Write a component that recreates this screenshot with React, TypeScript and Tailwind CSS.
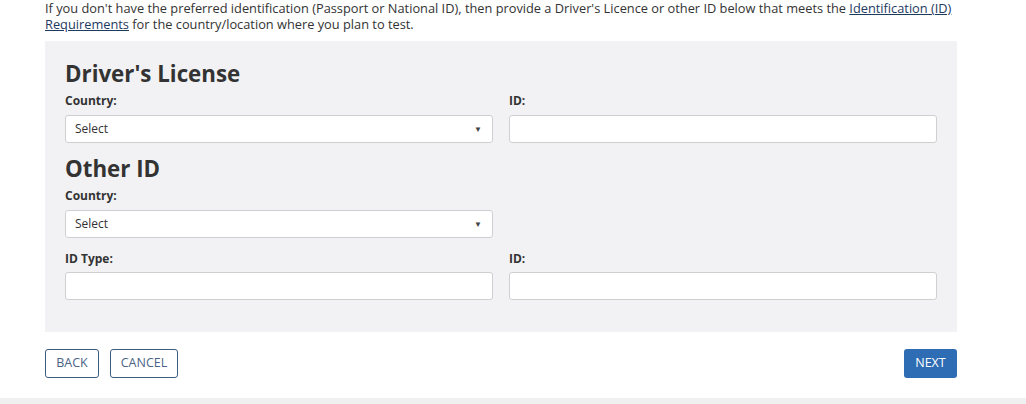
import { ReactNode } from 'react'

interface FieldProps {
  label: string
  gap?: string
  children: ReactNode
}

function Field({ label, gap = 'mt-[6px]', children }: Readonly<FieldProps>) {
  return (
    <div className="flex flex-col">
      <label className="text-[12px] leading-[16px] font-bold text-[#333]">{label}</label>
      <div className={gap}>{children}</div>
    </div>
  )
}

function SelectBox() {
  return (
    <div className="h-[28px] w-full bg-white border border-[#cfcfd2] rounded-[3px] flex items-center justify-between pl-[9px] pr-[9px]">
      <span className="text-[12px] text-[#333]">Select</span>
      <span className="text-[8px] text-[#444] leading-none mr-[1px]">▼</span>
    </div>
  )
}

function TextBox() {
  return <input type="text" className="h-[28px] w-full bg-white border border-[#cfcfd2] rounded-[3px] outline-none px-[9px] text-[12px]" />
}

export default function App() {
  return (
    <div className="w-[1026px] h-[404px] bg-white overflow-hidden flex flex-col text-[#333]" style={{ fontFamily: '"Open Sans", "Liberation Sans", sans-serif' }}>
      <div className="ml-[45px] w-[912px]">
        <p className="text-[12.8px] leading-[16px] text-[#333]">
          If you don't have the preferred identification (Passport or National ID), then provide a Driver's Licence or other ID below that meets the{' '}
          <a href="#" className="underline text-[#1d3a5f]">Identification (ID) Requirements</a> for the country/location where you plan to test.
        </p>

        <div className="mt-[9px] bg-[#f2f2f4] px-[20px] pt-[20px] pb-[32px]">
          <h2 className="text-[22.3px] leading-[26px] font-bold text-[#333]">Driver's License</h2>
          <div className="mt-[6px] grid grid-cols-2 gap-x-[16px]">
            <Field label="Country:"><SelectBox /></Field>
            <Field label="ID:"><TextBox /></Field>
          </div>

          <h2 className="mt-[13px] text-[22.3px] leading-[26px] font-bold text-[#333]">Other ID</h2>
          <div className="mt-[6px] grid grid-cols-2 gap-x-[16px]">
            <Field label="Country:"><SelectBox /></Field>
          </div>
          <div className="mt-[13px] grid grid-cols-2 gap-x-[16px]">
            <Field label="ID Type:" gap="mt-[5px]"><TextBox /></Field>
            <Field label="ID:" gap="mt-[5px]"><TextBox /></Field>
          </div>
        </div>

        <div className="mt-[17px] flex items-center justify-between">
          <div className="flex gap-[11px]">
            <button className="h-[29px] w-[54px] border border-[#3e5c7e] rounded-[3px] text-[12.5px] text-[#4b6485] bg-white">BACK</button>
            <button className="h-[29px] w-[68px] border border-[#3e5c7e] rounded-[3px] text-[12.5px] text-[#4b6485] bg-white">CANCEL</button>
          </div>
          <button className="h-[29px] w-[53px] rounded-[3px] text-[12.5px] text-white bg-[#2e6db4]">NEXT</button>
        </div>
      </div>
      <div className="mt-auto h-[6px] w-full bg-[#f0f0f1]" />
    </div>
  )
}
